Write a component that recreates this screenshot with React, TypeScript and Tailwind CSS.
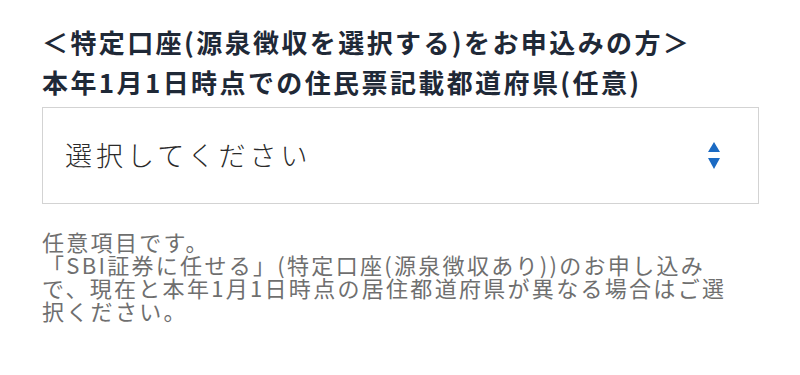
import React from 'react';

const jp = { fontFamily: '"Noto Sans CJK JP", "Noto Sans", sans-serif' };

const SortArrows: React.FC = () => (
  <svg width="14" height="28" viewBox="0 0 14 28" className="shrink-0">
    <path d="M7 0 L13 10 L1 10 Z" fill="#1b6ac3" />
    <path d="M1 16 L13 16 L7 27 Z" fill="#1b6ac3" />
  </svg>
);

export default function App() {
  return (
    <div className="w-[800px] h-[375px] bg-white pl-[42px] pr-[41px] pt-[22px]" style={jp}>
      <h2 className="text-[26px] leading-[40px] font-bold text-[#1f2937] tracking-[2.4px] whitespace-nowrap">
        ＜特定口座(源泉徴収を選択する)をお申込みの方＞
        <br />
        本年1月1日時点での住民票記載都道府県(任意)
      </h2>

      <div className="mt-[5px] h-[97px] border border-[#d3d3d3] bg-white flex items-center justify-between pl-[22px] pr-[37px]">
        <span className="text-[27px] text-[#2a2a2a] tracking-[4px] font-light">選択してください</span>
        <SortArrows />
      </div>

      <p className="mt-[26px] text-[22px] leading-[23px] text-[#6f6f6f] tracking-[2.3px] whitespace-nowrap">
        任意項目です。
        <br />
        「SBI証券に任せる」(特定口座(源泉徴収あり))のお申し込み
        <br />
        で、現在と本年1月1日時点の居住都道府県が異なる場合はご選
        <br />
        択ください。
      </p>
    </div>
  );
}
